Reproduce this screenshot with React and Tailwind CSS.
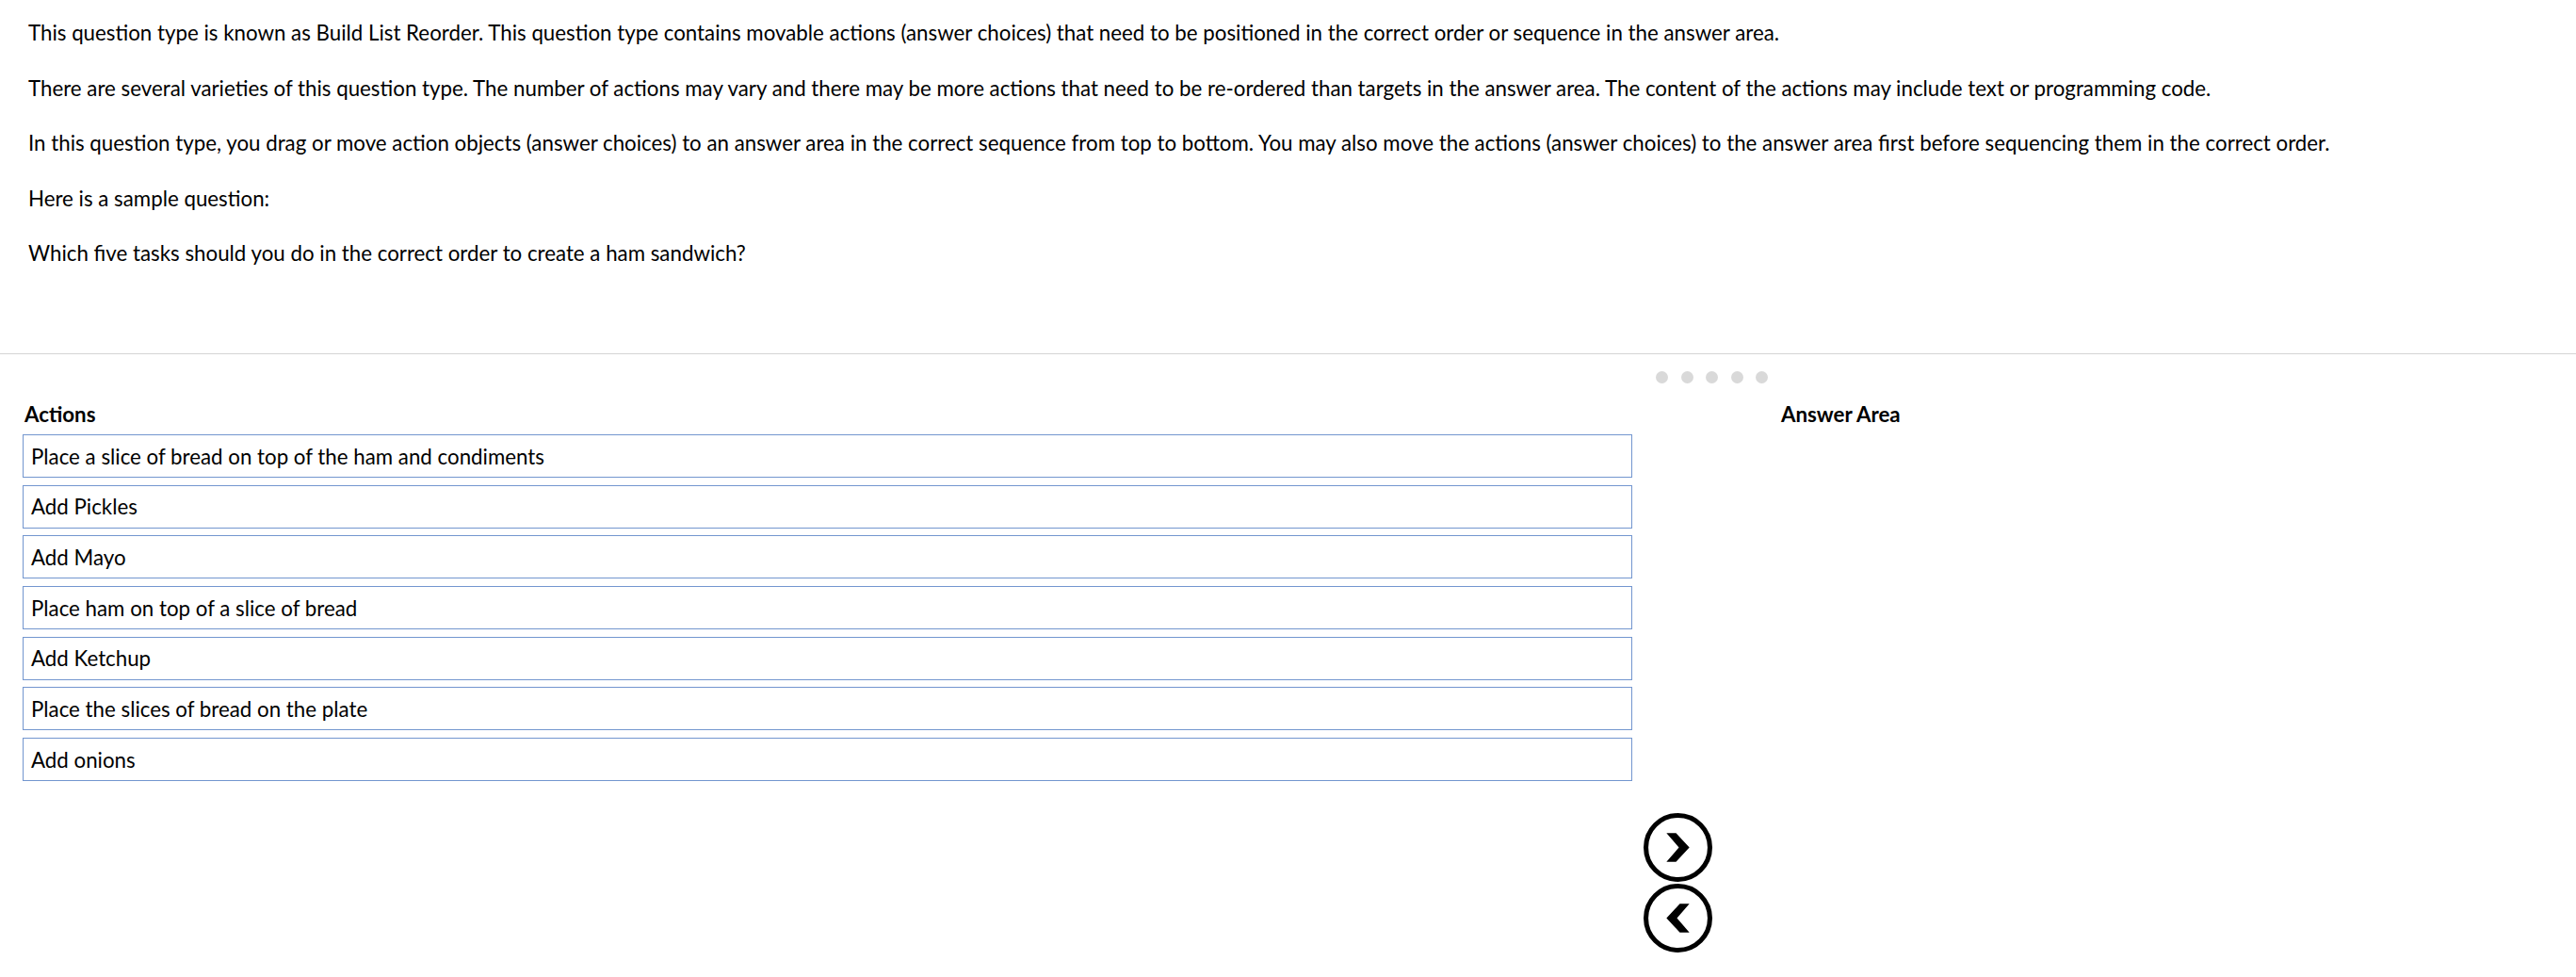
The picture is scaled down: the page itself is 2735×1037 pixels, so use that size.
import React from "react";

const paragraphs = [
  "This question type is known as Build List Reorder. This question type contains movable actions (answer choices) that need to be positioned in the correct order or sequence in the answer area.",
  "There are several varieties of this question type. The number of actions may vary and there may be more actions that need to be re-ordered than targets in the answer area. The content of the actions may include text or programming code.",
  "In this question type, you drag or move action objects (answer choices) to an answer area in the correct sequence from top to bottom. You may also move the actions (answer choices) to the answer area first before sequencing them in the correct order.",
  "Here is a sample question:",
  "Which five tasks should you do in the correct order to create a ham sandwich?",
];

const actions = [
  "Place a slice of bread on top of the ham and condiments",
  "Add Pickles",
  "Add Mayo",
  "Place ham on top of a slice of bread",
  "Add Ketchup",
  "Place the slices of bread on the plate",
  "Add onions",
];

function CircleButton({ dir }) {
  const pts =
    dir === "right"
      ? "24,21 34,21 48,36 34,51 24,51 37,36"
      : "48,21 38,21 24,36 38,51 48,51 35,36";
  return (
    <button className="block w-[73px] h-[73px] p-0 bg-transparent border-0">
      <svg width="73" height="73" viewBox="0 0 72 72">
        <circle cx="36" cy="36" r="33.5" fill="none" stroke="#000" strokeWidth="5" />
        <polygon points={pts} fill="#000" />
      </svg>
    </button>
  );
}

export default function App() {
  return (
    <div className="w-[2735px] h-[1037px] bg-white text-black overflow-hidden font-['Lato',_sans-serif] text-[22.3px]">
      <div className="pl-[30px] pt-[20px] h-[375px] flex flex-col gap-[29.5px]">
        {paragraphs.map((p, i) => (
          <p key={i} className="leading-[29px] m-0">
            {p}
          </p>
        ))}
      </div>
      <div className="h-px bg-[#d4d4d4]" />
      <div className="flex">
        <div className="ml-[24px] w-[1709px] pt-[49px]">
          <div className="font-bold leading-[30px] pl-[2px] mb-[6px]">Actions</div>
          <div className="flex flex-col gap-[7.7px]">
            {actions.map((a) => (
              <div
                key={a}
                className="h-[46px] border border-[#7396cf] flex items-center pl-[8px] leading-[29px]"
              >
                {a}
              </div>
            ))}
          </div>
        </div>
        <div className="w-[158px] flex flex-col">
          <div className="pt-[18px] pl-[25px] flex gap-[13.5px]">
            {[0, 1, 2, 3, 4].map((i) => (
              <span key={i} className="block w-[13px] h-[13px] rounded-full bg-[#d9d9d9]" />
            ))}
          </div>
          <div className="mt-[456px] ml-[12px] flex flex-col gap-[2px]">
            <CircleButton dir="right" />
            <CircleButton dir="left" />
          </div>
        </div>
        <div className="pt-[49px]">
          <div className="font-bold leading-[30px]">Answer Area</div>
        </div>
      </div>
    </div>
  );
}
